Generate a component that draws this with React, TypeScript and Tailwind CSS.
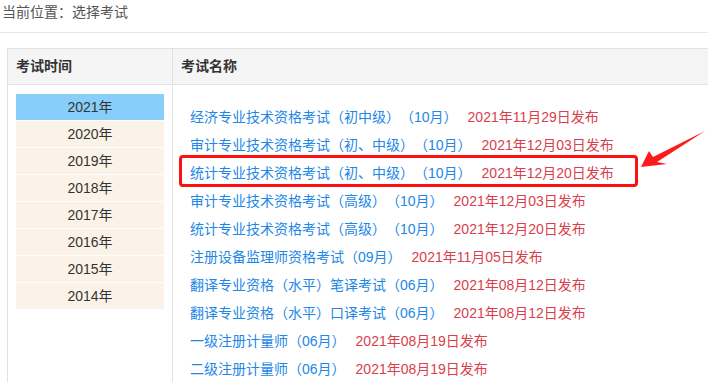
import React from "react";

const years = ["2021年", "2020年", "2019年", "2018年", "2017年", "2016年", "2015年", "2014年"];

const exams: [string, string][] = [
  ["经济专业技术资格考试（初中级）（10月）", "2021年11月29日发布"],
  ["审计专业技术资格考试（初、中级）（10月）", "2021年12月03日发布"],
  ["统计专业技术资格考试（初、中级）（10月）", "2021年12月20日发布"],
  ["审计专业技术资格考试（高级）（10月）", "2021年12月03日发布"],
  ["统计专业技术资格考试（高级）（10月）", "2021年12月20日发布"],
  ["注册设备监理师资格考试（09月）", "2021年11月05日发布"],
  ["翻译专业资格（水平）笔译考试（06月）", "2021年08月12日发布"],
  ["翻译专业资格（水平）口译考试（06月）", "2021年08月12日发布"],
  ["一级注册计量师（06月）", "2021年08月19日发布"],
  ["二级注册计量师（06月）", "2021年08月19日发布"],
];

export default function App() {
  return (
    <div
      className="relative w-[708px] h-[382px] overflow-hidden bg-white text-[14px] [text-spacing-trim:space-all]"
      style={{ fontFamily: '"Liberation Sans", "Noto Sans CJK SC", sans-serif' }}
    >
      <div className="h-[33px] border-b border-[#e6e6e6] pl-[2px] leading-[24px] text-[#555]">
        当前位置：选择考试
      </div>

      <div className="ml-[7px] mt-[15px] w-[740px] h-[400px] border-l border-t border-[#e2e2e2] flex">
        <div className="w-[165px] border-r border-[#e2e2e2] flex flex-col">
          <div className="h-[36px] border-b border-[#e2e2e2] bg-[#f5f5f5] pl-[8px] flex items-center text-[#333] font-bold">
            考试时间
          </div>
          <div className="px-[8px] pt-[9px] flex flex-col gap-[1px]">
            {years.map((y, i) => (
              <div
                key={y}
                className={
                  "h-[26px] flex items-center justify-center text-[#333] " +
                  (i === 0 ? "bg-[#87cefa]" : "bg-[#fcf3e8]")
                }
              >
                {y}
              </div>
            ))}
          </div>
        </div>
        <div className="flex-1 flex flex-col">
          <div className="h-[36px] border-b border-[#e2e2e2] bg-[#f5f5f5] pl-[8px] flex items-center text-[#333] font-bold">
            考试名称
          </div>
          <div className="pl-[17px] pt-[18px] flex flex-col">
            {exams.map(([name, date], i) => (
              <div key={i} className="h-[28px] leading-[28px] whitespace-nowrap">
                <span className="text-[#2287e6]">{name}</span>
                <span className="ml-[10px] text-[#d9404c]">{date}</span>
              </div>
            ))}
          </div>
        </div>
      </div>

      <div className="absolute left-[179px] top-[155px] w-[459px] h-[32px] border-[3px] border-[#ff1010] rounded-[4px]" />

      <svg className="absolute left-0 top-0" width="708" height="382" viewBox="0 0 708 382">
        <polygon
          points="641,167 649,151 653,157 705,131 657,162 667,164"
          fill="#ff1a1a"
        />
      </svg>
    </div>
  );
}
